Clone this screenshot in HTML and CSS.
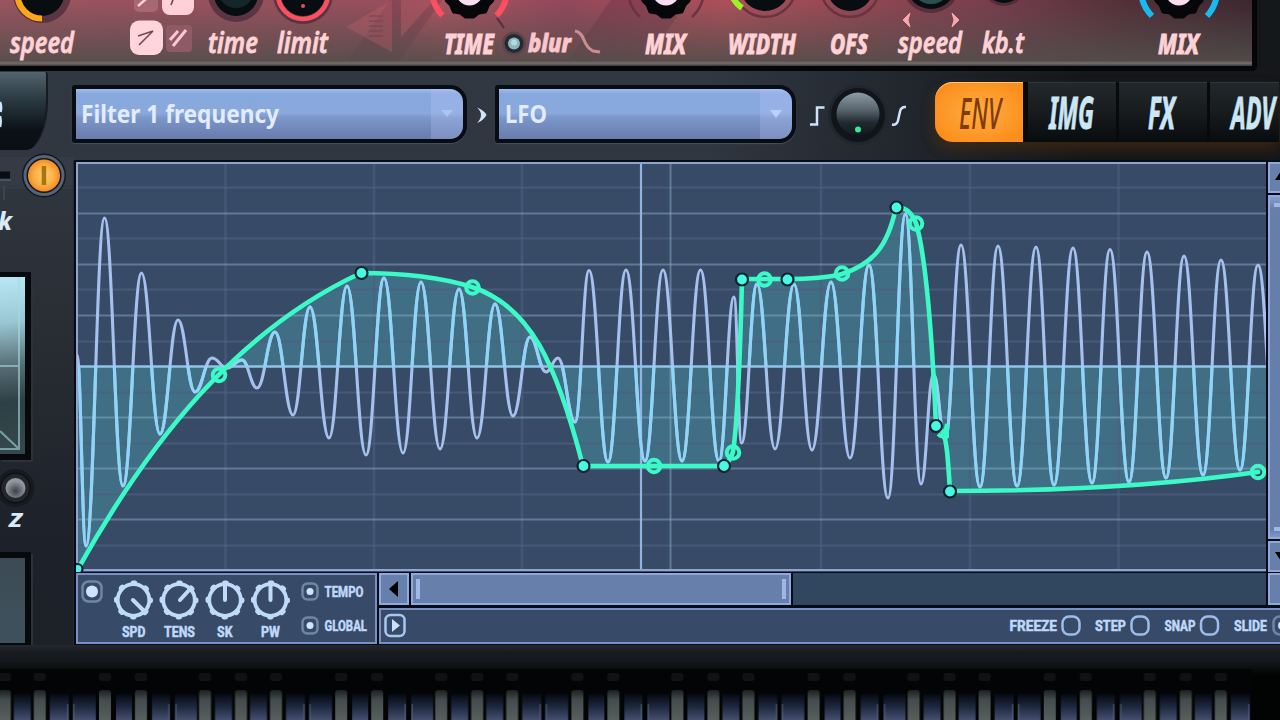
FILE: index.html
```html
<!DOCTYPE html>
<html lang="en">
<head>
<meta charset="utf-8">
<title>Synth envelope editor</title>
<link rel="stylesheet" href="styles.css">
</head>
<body>
<main class="synth">
  <section class="fx-panel">
    <svg class="module" width="82" viewBox="0 0 82 66">
      <circle cx="42" cy="-6" r="29" class="knob-shadow"/><circle cx="42" cy="-6" r="22" class="knob-dark"/>
      <path d="M17.5-6A24.500 24.500 0 0 0 42 18.500" class="arc orange"/>
      <text x="10" y="53" textLength="64" lengthAdjust="spacingAndGlyphs" class="label thin">speed</text>
    </svg>
    <svg class="module" width="116" viewBox="82 0 116 66">
      <rect x="134" y="-12" width="24" height="24" rx="5" fill="#a86773"/>
      <path d="M138 6l8-7" stroke="#ffd0d8" stroke-width="2.500"/>
      <rect x="162" y="-17" width="32" height="32" rx="8" fill="#ffd0d8"/>
      <path d="M171 5l3-8" stroke="#6b3d48" stroke-width="1.500"/>
      <rect x="130" y="20.500" width="33" height="34.500" rx="9" fill="#ffd4da"/>
      <path d="M139 45l14-14M138 36l15-5" stroke="#754955" stroke-width="1.600" fill="none"/>
      <rect x="166" y="25" width="26" height="27" rx="4" fill="#8d5a65"/>
      <path d="M170 40l8-9M173 46l13-16" stroke="#ffc6cf" stroke-width="3"/>
    </svg>
    <svg class="module" width="70" viewBox="198 0 70 66">
      <circle cx="236" cy="-6" r="28" class="knob-shadow"/><circle cx="236" cy="-6" r="22" class="knob-dark"/>
      <circle cx="236" cy="-10" r="18" fill="#15262b"/>
      <text x="208" y="53" textLength="50" lengthAdjust="spacingAndGlyphs" class="label thin">time</text>
    </svg>
    <svg class="module" width="68" viewBox="268 0 68 66">
      <circle cx="303" cy="-6" r="30" class="knob-shadow"/><circle cx="303" cy="-6" r="22" class="knob-dark"/>
      <circle cx="303" cy="-6" r="25" class="ring red"/><circle cx="303" cy="6" r="2" fill="#e44f62"/>
      <text x="277" y="53" textLength="51" lengthAdjust="spacingAndGlyphs" class="label thin">limit</text>
    </svg>
    <svg class="module" width="98" viewBox="336 0 98 66">
      <path d="M346 27L392 0V52Z" fill="#c8626a" opacity=".32"/><path d="M401 37V0H434Z" fill="#c9666d" opacity=".35"/>
      <path d="M369 16h14M369 21h14M369 26h14M369 31h14M369 36h14" stroke="#6f4450" stroke-width="1.500" opacity=".6"/>
    </svg>
    <svg class="module" width="68" viewBox="434 0 68 66">
      <use href="#bigknob" x="469.500" y="-8"/>
      <path d="M432-8A37.500 37.500 0 0 0 442.500 15.500M507-8A37.500 37.500 0 0 1 496.500 15.500" class="arc red"/>
      <path d="M497 18l7 10" stroke="#5a2a36" stroke-width="2"/>
      <text x="444" y="53.500" textLength="50" lengthAdjust="spacingAndGlyphs" class="label">TIME</text>
    </svg>
    <svg class="module" width="116" viewBox="502 0 116 66">
      <circle cx="514" cy="43.500" r="12" fill="#5f444a"/><circle cx="514" cy="43.500" r="9.500" fill="#222b31"/><circle cx="514" cy="43.500" r="6" fill="#8fb5bf"/><circle cx="514" cy="42.500" r="3" fill="#b4dbe2"/>
      <text x="528" y="51.500" textLength="43" lengthAdjust="spacingAndGlyphs" class="label blur">blur</text>
      <path d="M575 31q6 1 9 9t9 11l7 1" fill="none" stroke="#cc8f91" stroke-width="3"/>
    </svg>
    <svg class="module" width="96" viewBox="618 0 96 66">
      <use href="#bigknob" x="666" y="-8"/>
      <path d="M628-8A38 38 0 0 0 640 17M704-8A38 38 0 0 1 692 17" class="faint"/>
      <text x="645" y="53.500" textLength="41" lengthAdjust="spacingAndGlyphs" class="label">MIX</text>
    </svg>
    <svg class="module" width="96" viewBox="714 0 96 66">
      <circle cx="765" cy="-14" r="31" class="faint"/><circle cx="765" cy="-14" r="25" class="knob-dark"/>
      <path d="M733-2A33 33 0 0 0 742 8" class="arc green"/>
      <text x="728" y="53.500" textLength="68" lengthAdjust="spacingAndGlyphs" class="label">WIDTH</text>
    </svg>
    <svg class="module" width="78" viewBox="810 0 78 66">
      <circle cx="850" cy="-12" r="29" class="faint"/><circle cx="850" cy="-12" r="23" class="knob-dark"/>
      <text x="830" y="53.500" textLength="38" lengthAdjust="spacingAndGlyphs" class="label">OFS</text>
    </svg>
    <svg class="module" width="84" viewBox="888 0 84 66">
      <circle cx="931" cy="-16" r="29" class="knob-shadow"/><circle cx="931" cy="-16" r="25" class="knob-dark"/><circle cx="931" cy="-16" r="20" fill="#2b5052"/>
      <path d="M910 13l-7 7 7 7-2-7zM952 13l7 7-7 7 2-7z" fill="#f4a9ad" stroke="#f4a9ad"/>
      <text x="898" y="53" textLength="64" lengthAdjust="spacingAndGlyphs" class="label thin">speed</text>
    </svg>
    <svg class="module" width="158" viewBox="972 0 158 66">
      <circle cx="1004" cy="-16" r="22" class="knob-shadow"/><circle cx="1004" cy="-16" r="19" class="knob-dark"/>
      <text x="982" y="53" textLength="42" lengthAdjust="spacingAndGlyphs" class="label thin">kb.t</text>
    </svg>
    <svg class="module" width="96" viewBox="1130 0 96 66">
      <use href="#bigknob" x="1179" y="-8"/>
      <path d="M1141-8A38 38 0 0 0 1152 16M1217-8A38 38 0 0 1 1207 16" class="arc cyan"/>
      <text x="1158" y="53.500" textLength="41" lengthAdjust="spacingAndGlyphs" class="label">MIX</text>
    </svg>
  </section>

  <section class="toolbar">
    <div class="side-tab"><svg width="4" height="34" viewBox="0 97 4 34"><path d="M0 102q2 4 .5 10M0 116q1.500 5 0 11" fill="none" stroke="#cfe6ff" stroke-width="2.500"/></svg></div>
    <div class="dropdown target">
      <svg width="210" height="50" viewBox="77 90 210 50"><text x="82" y="123.500" textLength="198" lengthAdjust="spacingAndGlyphs" class="choice">Filter 1 frequency</text></svg>
      <span class="drop"><svg width="18" height="12" viewBox="0 0 18 12"><path d="M3 2h12L9 9z" fill="#a9c5f4"/></svg></span>
    </div>
    <svg class="chevron" width="12" height="22" viewBox="475 104 12 22"><path d="M477 107.500q7 2.500 9.500 7.500q-2.500 5-9.500 8q4-4 4-8q0-4-4-7.500z" fill="#cfe3fb"/></svg>
    <div class="dropdown source">
      <svg width="80" height="50" viewBox="500 90 80 50"><text x="506" y="123.500" textLength="42" lengthAdjust="spacingAndGlyphs" class="choice">LFO</text></svg>
      <span class="drop"><svg width="18" height="12" viewBox="0 0 18 12"><path d="M3 2h12L9 10z" fill="#b7d2fd"/></svg></span>
    </div>
    <svg class="curve-knob" width="110" height="78" viewBox="804 77 110 78">
      <path d="M810 124.500h7v-17h7.500" fill="none" stroke="#cfe3fb" stroke-width="2.500"/>
      <circle cx="858" cy="115" r="30" fill="#20262d"/><circle cx="858" cy="115" r="27" fill="#10151a"/><circle cx="858" cy="114" r="21.500" fill="url(#metal)"/>
      <circle cx="858" cy="129.500" r="3" fill="#38e892"/>
      <path d="M892 124.500q5 1 6-4l2-9q1-5 6-4.500" fill="none" stroke="#cfe3fb" stroke-width="2.500"/>
    </svg>
    <nav class="tabs">
      <span class="tab active"><svg width="88" height="60" viewBox="935 82 88 60"><text x="959" y="129" textLength="42" lengthAdjust="spacingAndGlyphs" class="tab-text env">ENV</text></svg></span>
      <span class="tab"><svg width="88" height="60" viewBox="1028 82 88 60"><text x="1049" y="129" textLength="45" lengthAdjust="spacingAndGlyphs" class="tab-text">IMG</text></svg></span>
      <span class="tab"><svg width="88" height="60" viewBox="1119 82 88 60"><text x="1148" y="129" textLength="27" lengthAdjust="spacingAndGlyphs" class="tab-text">FX</text></svg></span>
      <span class="tab"><svg width="69" height="60" viewBox="1211 82 69 60"><text x="1232" y="129" textLength="44" lengthAdjust="spacingAndGlyphs" class="tab-text">ADV</text></svg></span>
    </nav>
  </section>

  <section class="workspace">
    <aside class="sidebar">
      <svg width="74" height="112" viewBox="0 160 74 112">
        <path d="M0 157h75v32H0z" fill="#3b4650" opacity=".35"/>
        <path d="M0 175h10" stroke="#090d12" stroke-width="7"/><path d="M0 180h11" stroke="#505a64" stroke-width="1.500"/><path d="M4 186v14" stroke="#3c464f" stroke-width="2"/>
        <circle cx="44" cy="175.500" r="22" fill="#15191e"/><circle cx="44" cy="175.500" r="20.500" fill="#55657b"/><circle cx="44" cy="175.500" r="17.500" fill="#171513"/><circle cx="44" cy="175.500" r="16" fill="url(#lamp)"/>
        <rect x="41.700" y="166" width="4.500" height="19" fill="#a9760e"/>
        <text x="-2" y="230" textLength="14" lengthAdjust="spacingAndGlyphs" class="axis">k</text>
      </svg>
      <div class="xy-pad"><svg width="25" height="177" viewBox="0 277 25 177"><path d="M0 366h20M19 277v172M0 449h20M0 431l19 18" fill="none" stroke="#a5dce0" stroke-width="2" opacity=".6"/></svg></div>
      <svg width="74" height="92" viewBox="0 460 74 92">
        <circle cx="15.500" cy="488" r="19" fill="#171b20"/><circle cx="15.500" cy="488" r="15.500" fill="#0d1115"/><circle cx="15.500" cy="488" r="14" fill="#23272d"/><circle cx="15.500" cy="488" r="10" fill="url(#metal2)"/>
        <text x="9" y="527" textLength="13" lengthAdjust="spacingAndGlyphs" class="axis z">Z</text>
      </svg>
      <div class="mini-pad"></div>
    </aside>

    <div class="editor">
      <div class="graph-row">
        <svg class="graph" width="1190" height="410" viewBox="76 162 1190 410">
          <defs>
            <radialGradient id="lamp"><stop offset="0" stop-color="#ffd071"/><stop offset=".6" stop-color="#fdb149"/><stop offset="1" stop-color="#f58b23"/></radialGradient>
            <linearGradient id="metal" x2="0" y2="1"><stop offset="0" stop-color="#8c9ba5"/><stop offset=".4" stop-color="#59656e"/><stop offset=".7" stop-color="#20292f"/><stop offset="1" stop-color="#101a1e"/></linearGradient>
            <radialGradient id="metal2" cy=".65"><stop offset="0" stop-color="#3c4148"/><stop offset="1" stop-color="#92989f"/></radialGradient>
            <g id="bigknob"><path d="M-25 0L-23 9L-19 13L-16 20L-9 21L-4 25H4L9 21L16 20L19 13L23 9L25 0Z" fill="#05070a" stroke="#05070a" stroke-width="3" stroke-linejoin="round"/><circle r="13.500" fill="#fbdcf3"/></g>
            <clipPath id="filled"><path id="area" d="M78 366V569C150 440 238 330 361 273C400 273 440 277 472 287C530 306 556 362 583 466H724C729 463 731 458 733 452C738 420 740 360 742 279H787C815 279 830 277 842 274C873 264 888 246 896 207C906 207 912 213 916 223C924 250 931 310 936 426L943 432C947 442 948 460 950 491C1050 491 1160 486 1258 472L1266 470V366Z"/></clipPath>
          </defs>
          <rect x="76" y="162" width="1190" height="410" fill="#374a66"/>
          <use href="#area" fill="#406f85"/>
          <path d="M76 187.500H1266M76 238.500H1266M76 289.500H1266M76 341.500H1266M76 392.500H1266M76 443.500H1266M76 494.500H1266M76 545.500H1266" class="minor"/>
          <path d="M225.500 162V570M374 162V570M522 162V570M821 162V570M970 162V570M1118.500 162V570" class="minor vertical"/>
          <path d="M76 213.500H1266M76 264.500H1266M76 315.500H1266M76 417.500H1266M76 468.500H1266M76 519.500H1266" class="major"/>
          <path d="M670.500 162V570" class="major"/>
          <path d="M641 162V570" stroke="#92b4e3" stroke-width="2.200"/>
          <path d="M76 366.500H1266" stroke="#8fc5ea" stroke-width="2.400"/>
          <path d="M76 163H1266M77 162V571M76 570H1266" stroke="#90a4d0" stroke-width="2" fill="none"/>
          <path class="wave"/><path class="wave bright" clip-path="url(#filled)"/>
          <path d="M78 569C150 440 238 330 361 273C400 273 440 277 472 287C530 306 556 362 583 466H724C729 463 731 458 733 452C738 420 740 360 742 279H787C815 279 830 277 842 274C873 264 888 246 896 207C906 207 912 213 916 223C924 250 931 310 936 426L943 432C947 442 948 460 950 491C1050 491 1160 486 1258 472" class="envelope"/>
          <g class="handles"><circle cx="219" cy="375" r="6.300"/><circle cx="472.500" cy="287.500" r="6.300"/><circle cx="654" cy="466" r="6.300"/><circle cx="733" cy="452.500" r="6.300"/><circle cx="764.500" cy="279.500" r="6.300"/><circle cx="842" cy="273.500" r="6.300"/><circle cx="916" cy="223.500" r="6.300"/><path d="M938 434q3 3 6 2l3-12v14"/><circle cx="1258" cy="472" r="6.300"/></g>
          <g class="nodes"><circle cx="77.500" cy="569" r="5"/><circle cx="361.500" cy="273" r="6"/><circle cx="583.500" cy="466" r="6"/><circle cx="724" cy="466" r="6"/><circle cx="742" cy="279.500" r="6"/><circle cx="787.500" cy="279.500" r="6"/><circle cx="896.500" cy="207.500" r="6"/><circle cx="936" cy="426" r="6"/><circle cx="950" cy="491.500" r="6"/></g>
        </svg>
        <div class="vscroll">
          <div class="box vbtn"><svg width="12" height="28" viewBox="1270 165 12 28"><path d="M1275 181h12l-6-9z"/></svg></div>
          <div class="box vthumb"></div>
          <div class="box vbtn"><svg width="12" height="28" viewBox="1270 542 12 28"><path d="M1275 551h12l-6 9z"/></svg></div>
        </div>
      </div>
      <div class="control-row">
        <div class="lfo">
          <svg width="298" height="67" viewBox="78 575 298 67">
            <defs><g id="dial"><circle r="15.800" fill="none" stroke="#c0dafa" stroke-width="3.800"/><circle r="17.200" fill="none" stroke="#c0dafa" stroke-width="4.600" stroke-linecap="round" stroke-dasharray="2 11.510" stroke-dashoffset="1"/></g></defs>
            <g class="toggle"><rect x="82.500" y="581.500" width="19" height="20" rx="6"/><circle cx="92" cy="591.500" r="6"/></g>
            <use href="#dial" x="133.500" y="600"/><use href="#dial" x="179" y="600"/><use href="#dial" x="225" y="600"/><use href="#dial" x="270.500" y="600"/>
            <path d="M133 600l11 11M180 600l11-12M225 600v-16M270.500 600v-16" stroke="#c0dafa" stroke-width="4" stroke-linecap="round"/>
            <g class="tiny"><text x="122" y="637" textLength="23.500" lengthAdjust="spacingAndGlyphs">SPD</text><text x="164" y="637" textLength="31" lengthAdjust="spacingAndGlyphs">TENS</text><text x="217" y="637" textLength="15.500" lengthAdjust="spacingAndGlyphs">SK</text><text x="261" y="637" textLength="19" lengthAdjust="spacingAndGlyphs">PW</text><text x="324.500" y="597" textLength="39" lengthAdjust="spacingAndGlyphs">TEMPO</text><text x="324.500" y="631" textLength="42.500" lengthAdjust="spacingAndGlyphs">GLOBAL</text></g>
            <g class="toggle"><rect x="302.500" y="583.500" width="15" height="16" rx="5"/><circle cx="310" cy="591.500" r="3.500"/><rect x="302.500" y="617.500" width="15" height="16" rx="5"/><circle cx="310" cy="625.500" r="3.500"/></g>
          </svg>
        </div>
        <div class="lower">
          <div class="hscroll">
            <div class="box hbtn"><svg width="14" height="20" viewBox="0 0 14 20"><path d="M11 2v16L2 10z"/></svg></div>
            <div class="box hthumb"></div>
            <div class="track"></div>
            <div class="box corner"></div>
          </div>
          <div class="options">
            <svg width="30" height="31" viewBox="381 610 30 31"><rect x="385.500" y="615" width="19" height="21" rx="5" fill="none" stroke="#a9c7ef" stroke-width="2.500"/><path d="M392 619v13l8-6.500z" fill="#cbe1ff"/></svg>
            <svg width="276" height="31" viewBox="1004 610 276 31">
              <g class="tiny"><text x="1009.500" y="631" textLength="47.500" lengthAdjust="spacingAndGlyphs">FREEZE</text><text x="1095" y="631" textLength="31" lengthAdjust="spacingAndGlyphs">STEP</text><text x="1164.500" y="631" textLength="31" lengthAdjust="spacingAndGlyphs">SNAP</text><text x="1234" y="631" textLength="33" lengthAdjust="spacingAndGlyphs">SLIDE</text></g>
              <g fill="none" stroke="#9dbde8" stroke-width="2.500"><rect x="1062.500" y="616.500" width="17" height="18" rx="6.500"/><rect x="1131.500" y="616.500" width="17" height="18" rx="6.500"/><rect x="1201" y="616.500" width="17" height="18" rx="6.500"/><rect x="1273.500" y="616.500" width="17" height="18" rx="6" stroke="#6d86a5"/></g><circle cx="1282" cy="625.500" r="4" fill="#cbe1ff"/>
            </svg>
          </div>
        </div>
      </div>
    </div>
  </section>

  <section class="keyboard">
    <svg width="1280" height="75" viewBox="0 645 1280 75">
      <defs>
        <linearGradient id="white" x2="0" y2="1"><stop offset="0" stop-color="#06090f"/><stop offset=".5" stop-color="#1e2940"/><stop offset="1" stop-color="#454f6e"/></linearGradient>
        <linearGradient id="black" x2="0" y2="1"><stop offset="0" stop-color="#1c2021"/><stop offset=".3" stop-color="#434b4c"/><stop offset="1" stop-color="#59625f"/></linearGradient>
        <pattern id="octave" patternUnits="userSpaceOnUse" x="99" y="669" width="236.200" height="51">
          <rect width="237" height="51" fill="#030405"/>
          <g fill="url(#white)"><rect x="17" y="25" width="16" height="26"/><rect x="53" y="25" width="18" height="26"/><rect x="76" y="25" width="22" height="26"/><rect x="116" y="25" width="17" height="26"/><rect x="151" y="25" width="17" height="26"/><rect x="187" y="25" width="19" height="26"/><rect x="210" y="25" width="23" height="26"/></g>
          <path d="M70 35V51M77 35V51M205 35V51M211 35V51" stroke="#54617e" stroke-width="1.500" opacity=".6"/>
          <g fill="url(#black)"><rect y="21" width="12" height="32" rx="3"/><rect x="36" y="21" width="12" height="32" rx="3"/><rect x="100" y="21" width="12" height="32" rx="3"/><rect x="136" y="21" width="12" height="32" rx="3"/><rect x="171" y="21" width="12" height="32" rx="3"/></g>
          <g fill="#101213"><rect y="4" width="12" height="8" rx="3"/><rect x="36" y="4" width="12" height="8" rx="3"/><rect x="100" y="4" width="12" height="8" rx="3"/><rect x="136" y="4" width="12" height="8" rx="3"/><rect x="171" y="4" width="12" height="8" rx="3"/></g>
        </pattern>
      </defs>
      <rect x="0" y="669" width="1252" height="51" fill="url(#octave)"/>
    </svg>
  </section>
</main>
<script src="wave.js"></script>
</body>
</html>
```

FILE: styles.css
```css
* { box-sizing: border-box; }
body { margin: 0; background: #14171b; font-family: "Noto Sans", sans-serif; }
svg { display: block; flex: none; }
.synth { width: 1280px; height: 720px; overflow: hidden; display: flex; flex-direction: column;
  background: linear-gradient(90deg, transparent 55%, rgba(14,15,17,.8) 85%), linear-gradient(#303842 10%, #30363f 25%, #292e35 45%, #1d2129 75%, #1c2027); }

.fx-panel { width: 1257px; height: 71px; flex: none; display: flex; overflow: hidden; border: solid #050608; border-width: 0 5px 5px 0; border-radius: 0 0 5px 0;
  background:
    linear-gradient(transparent 61px, #77706f 63px, #3c383b 66px),
    linear-gradient(180deg, transparent 5%, rgba(82,78,75,.9) 95%),
    linear-gradient(125deg, transparent 0 30%, rgba(70,30,55,.22) 30.1% 34%, transparent 34.1% 47%, rgba(80,30,60,.25) 47.1% 53%, transparent 53.1%),
    linear-gradient(90deg, #98545f, #954e5c 30%, #a85560 35%, #91485a 45%, #a95059 58%, #934853 68%, #743d4b 80%, #533039 90%, #3c2830); }
.module { height: 66px; overflow: visible; }
.label { font: italic 800 29px "Noto Sans", sans-serif; fill: #ffd2d6; stroke: #ffd2d6; stroke-width: .8px; }
.label.thin { font-weight: 600; }
.label.blur { font-size: 24px; fill: #fcc6cc; stroke: #fcc6cc; }
.knob-dark { fill: #080d11; }
.knob-shadow { fill: rgba(60,35,48,.6); }
.faint { fill: none; stroke: #6b3342; stroke-width: 2.5; }
.arc { fill: none; stroke-width: 6; }
.ring { fill: none; stroke-width: 4.5; }
.orange { stroke: #ffa817; }
.red { stroke: #fa5060; }
.green { stroke: #9df327; }
.cyan { stroke: #18baf0; }

.toolbar { height: 89px; flex: none; display: flex; align-items: flex-start; padding-top: 6px; }
.side-tab { width: 48px; height: 78px; margin-top: -5px; padding-top: 25px; flex: none; background: linear-gradient(#53646c, #2b3a42 35%, #0b1117 75%, #0a0f16); border-radius: 0 3px 22px 0 / 0 3px 50px 0; border-right: 2px solid #171c21; }
.dropdown { height: 58px; margin-top: 8px; border: 4px solid #080c13; border-radius: 3px 17px 17px 3px; flex: none; display: flex; justify-content: space-between;
  background: linear-gradient(#a1bbe9, #87a8dd 10%, #89a9dc 48%, #7b96c9 58%, #687bac); box-shadow: 0 1px 1px #46505b; }
.dropdown svg { overflow: visible; }
.target { width: 395px; margin-left: 24px; }
.source { width: 301px; margin-left: 8px; }
.drop { width: 32px; display: flex; align-items: center; justify-content: center; background: rgba(190,205,255,.25); border-radius: 0 13px 13px 0; }
.choice { font: 700 25.5px "Noto Sans", sans-serif; fill: #e3ebff; }
.chevron { margin: 27px 0 0 8px; }
.curve-knob { margin-left: 8px; overflow: visible; }
.tabs { display: flex; height: 60px; margin: 5px 0 0 21px; gap: 3px; background: #07090b; border-radius: 18px 0 0 18px; box-shadow: 0 8px 14px rgba(90,50,8,.3), -2px 6px 14px rgba(100,60,10,.25); flex: none; }
.tab { background: linear-gradient(#22282b, #191d20 45%, #090c0e); box-shadow: inset 0 1px #30373b; height: 60px; }
.tab svg { overflow: visible; }
.tab.active { background: radial-gradient(#ffad47, #fc8f1c 80%); border-radius: 18px 0 0 18px; box-shadow: inset 0 1px #ffc477; margin-right: 2px; }
.tab-text { font: italic 700 44px "Noto Sans", sans-serif; fill: #cbe6f5; stroke: #cbe6f5; stroke-width: .8px; }
.tab-text.env { fill: #7e3c07; font-weight: 500; stroke: none; }

.workspace { height: 485px; flex: none; display: flex; }
.sidebar { width: 74px; flex: none; display: flex; flex-direction: column; }
.sidebar svg { overflow: visible; }
.axis { font: italic 800 25px "Noto Sans", sans-serif; fill: #d8e9f8; }
.axis.z { font-size: 19px; }
.xy-pad { flex: none; width: 31px; height: 188px; border: solid #07090c; border-width: 5px 6px 6px 0; background: linear-gradient(175deg, #b8e8f4, #9ac9d5 25%, #576d74 50%, #2d4045 70%, #36484c); box-shadow: 2px 2px 0 #2b3238; }
.mini-pad { flex: none; width: 31px; height: 96px; border: solid #07090c; border-width: 6px 6px 5px 0; background: linear-gradient(#3d4a55, #3d525d); box-shadow: 2px 2px 0 #2b3238; }
.editor { width: 1206px; height: 485px; flex: none; padding: 2px 0 0 2px; background: #060b18; box-shadow: 0 2px 0 1px #252b31; display: flex; flex-direction: column; }
.graph-row { display: flex; gap: 2px; height: 411px; }
.minor { stroke: #4d607e; stroke-width: 2; opacity: .75; }
.minor.vertical { stroke-width: 2.500; opacity: .6; }
.major { stroke: #8aabc6; stroke-width: 2; opacity: .5; }
.wave { fill: none; stroke: #a6c1ed; stroke-width: 3.100; stroke-linejoin: round; }
.wave.bright { stroke: #8ed5f8; }
.envelope { fill: none; stroke: #3cfac8; stroke-width: 4.600; stroke-linejoin: round; stroke-linecap: round; }
.handles { fill: none; stroke: #3cfac8; stroke-width: 4; }
.nodes { fill: #48f8e2; stroke: #08242e; stroke-width: 2.200; }
.vscroll { width: 12px; display: flex; flex-direction: column; gap: 2px; overflow: hidden; }
.box { border: 2px solid #91a8dc; background: #677fab; flex: none; overflow: hidden; }
.vbtn { width: 32px; height: 31px; }
.vthumb { width: 32px; height: 344px; position: relative; background: linear-gradient(#8299c9 0 2px, #667eaa 12px calc(100% - 8px), #8097c7); }
.vthumb::before, .vthumb::after { content: ""; position: absolute; left: 4px; top: 6px; width: 20px; height: 4px; background: #9eb7e8; }
.vthumb::after { top: auto; bottom: 6px; }
.control-row { display: flex; gap: 2px; height: 71px; }
.lfo { width: 301px; height: 71px; border: 2px solid #7b90c2; background: #374a67; flex: none; overflow: hidden; }
.toggle rect { fill: none; stroke: #6e87a8; stroke-width: 2.500; }
.toggle circle { fill: #cfe5ff; }
.tiny { font: 800 14.5px Roboto, "Liberation Sans", sans-serif; fill: #bfd8fa; stroke: #bfd8fa; stroke-width: .4px; }
.lower { width: 901px; display: flex; flex-direction: column; gap: 3px; }
.hscroll { display: flex; height: 32px; gap: 2px; }
.hbtn { width: 30px; height: 32px; display: flex; align-items: center; justify-content: center; }
.hthumb { width: 380px; height: 32px; padding: 4px 3px; display: flex; justify-content: space-between; background: #677fab; }
.hthumb::before, .hthumb::after { content: ""; width: 4px; background: #9eb7e8; }
.track { width: 473px; background: #31475f; flex: none; }
.corner { width: 30px; }
.options { height: 36px; border: solid #7b90c2; border-width: 2px 0 2px 2px; background: #374a67; display: flex; justify-content: space-between; align-items: flex-start; }
.keyboard { height: 75px; flex: none; background: linear-gradient(#24292e, #171a1f 8px, #15181c 16px, #020303 30px); }
```

FILE: wave.js
```js
// Turning points of the modulation wave: x, y pairs.
const turns = [
  [77,355],[86,546],[104.5,218],[123,486],[141.5,273],[160,434],[178,320],[195,392],[212,358],[227,368],[242,360],
  [257,388],[275,332],[293,415],[310,307],[329,438],[347,286],[366,455],[384,278],[403,453],[421,282],[440,449],
  [459,289],[477,438],[495,304],[513,416],[530,337],[546,372],[558,358],[575,422],[589,270.5],[608,462],[626,270],
  [645,461],[663,270],[682,461],[700.5,270],[719,461],[734,297],[741.5,443],[757,284],[775,449],[794,284],
  [812,450],[831,282],[850,458],[869,265],[888,498],[905.5,214],[921,484],[933.5,374],[945,440],[961,245],
  [980,487],[998,246],[1017,486],[1036,247],[1054,485],[1073,248],[1092,483],[1110,249.5],[1129,482],[1147,252],
  [1166,478],[1184,256],[1203,475],[1221,260],[1240,470],[1258,265],[1277,468]
];
let d = "M" + turns[0].join(" ");
for (let i = 1; i < turns.length; i++) {
  const [x0, y0] = turns[i - 1], [x1, y1] = turns[i];
  const k = (x1 - x0) * 0.43;
  d += `C${x0 + k} ${y0} ${x1 - k} ${y1} ${x1} ${y1}`;
}
document.querySelectorAll(".wave").forEach(p => p.setAttribute("d", d));
```
